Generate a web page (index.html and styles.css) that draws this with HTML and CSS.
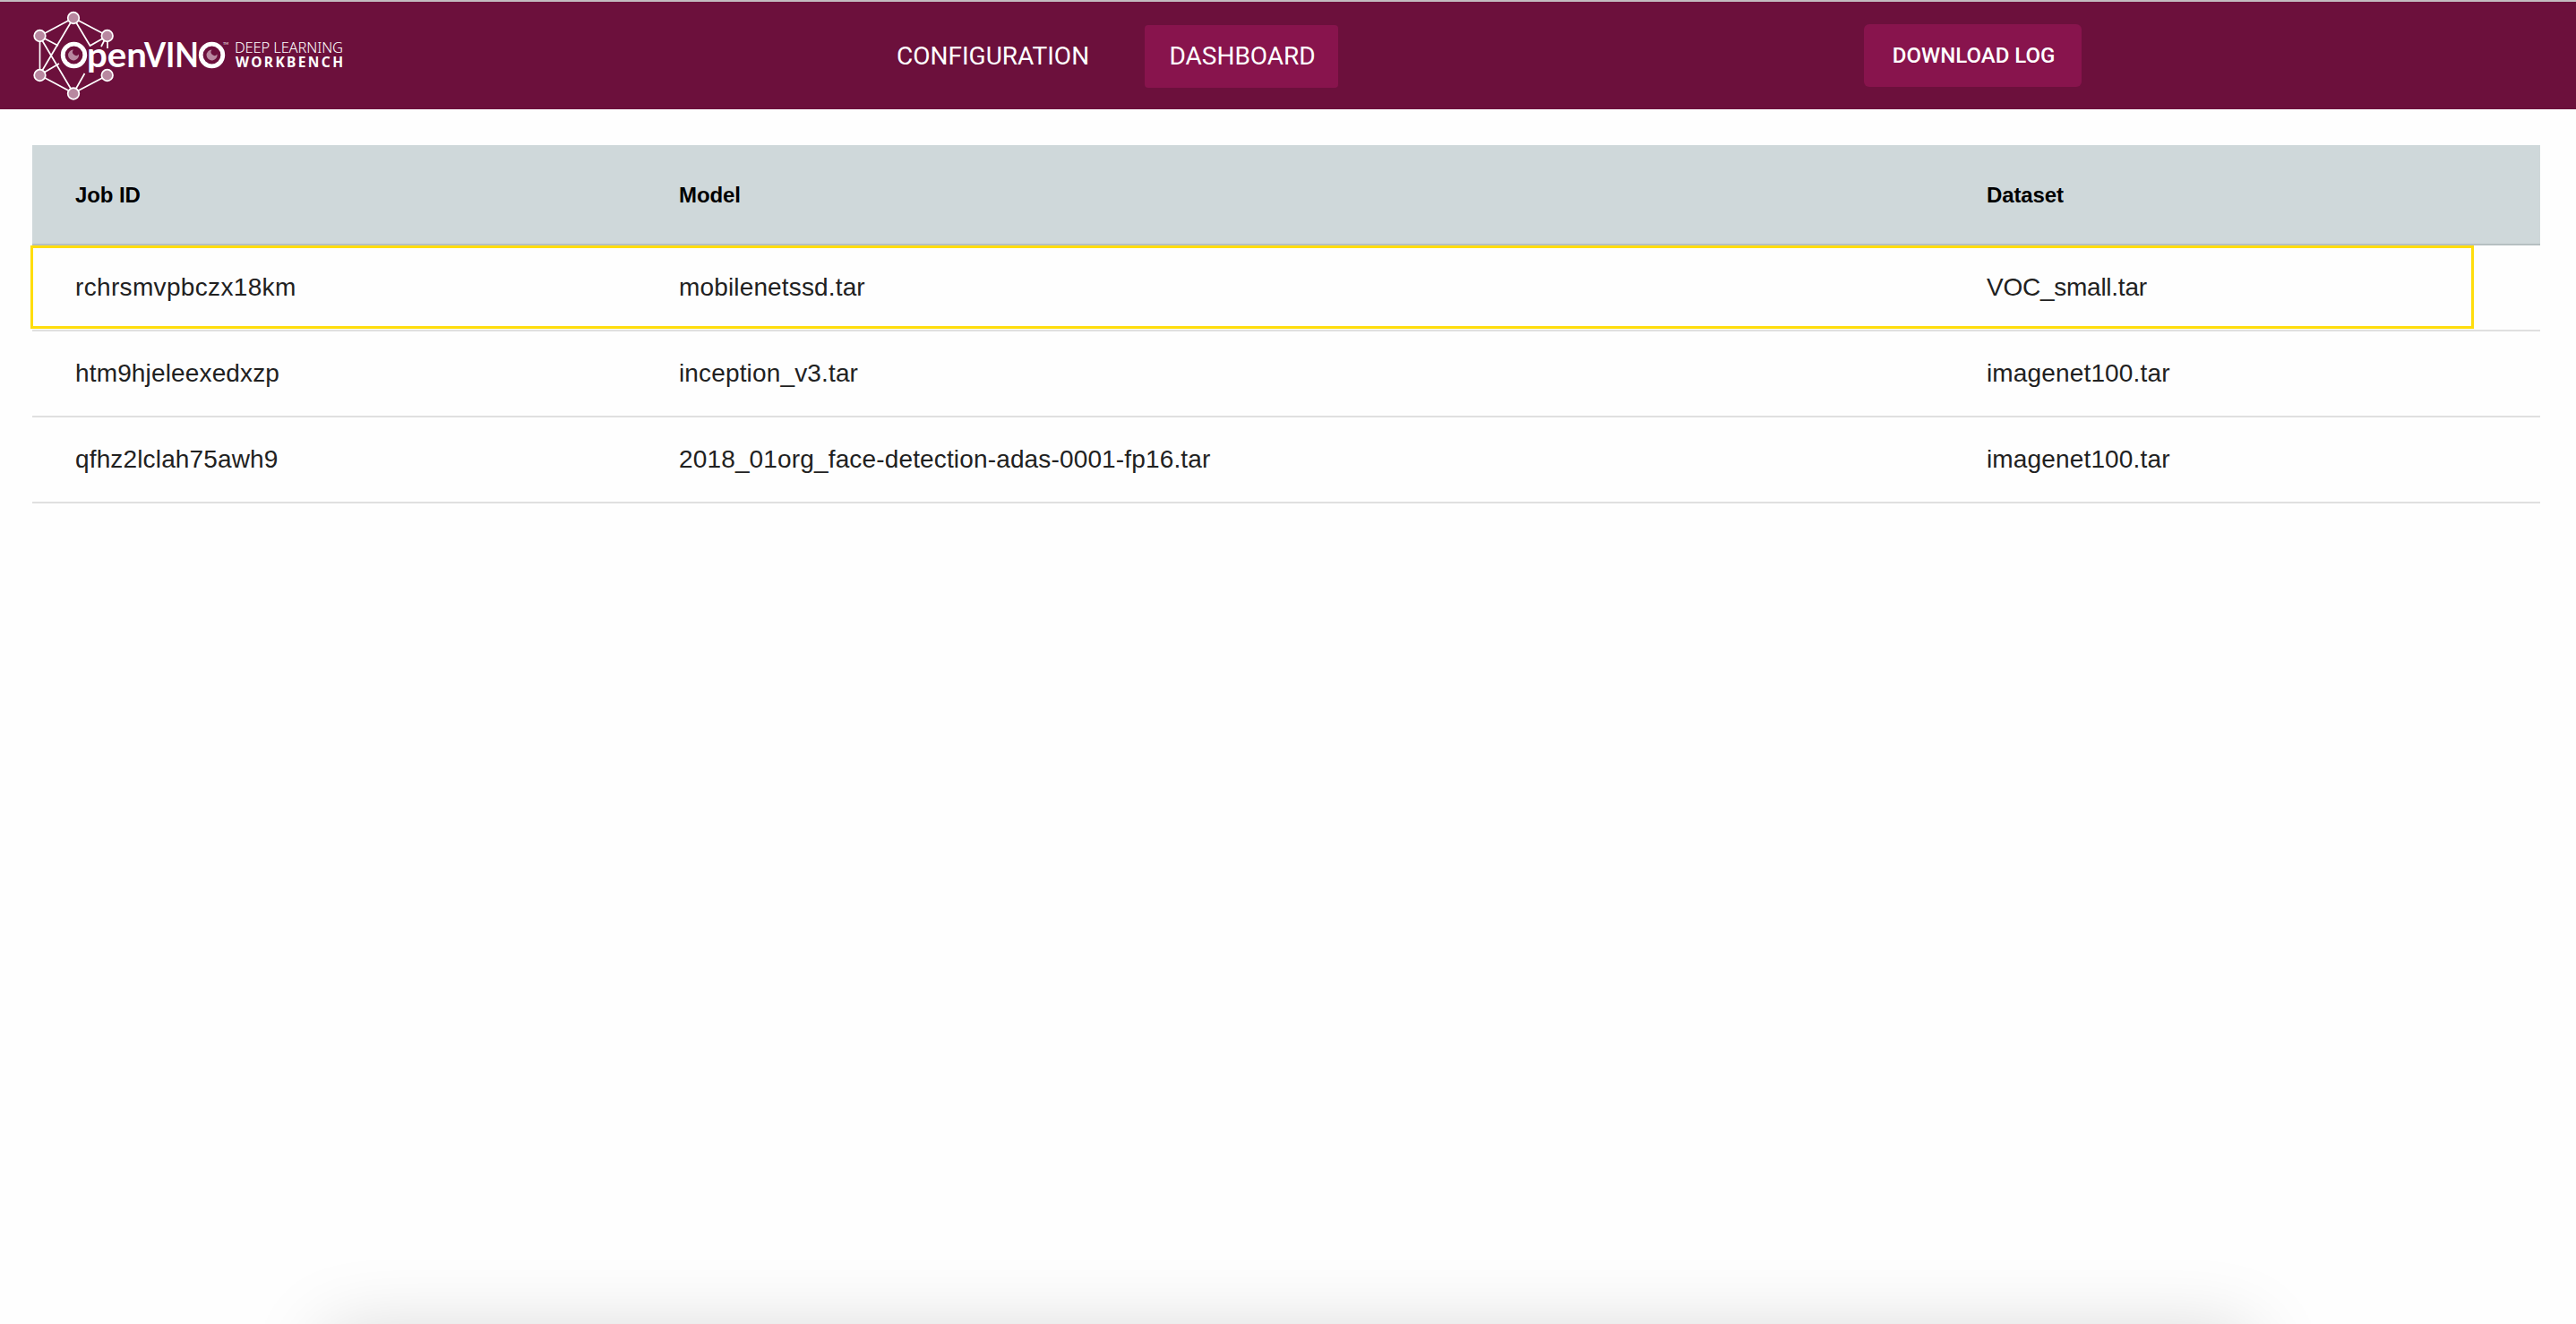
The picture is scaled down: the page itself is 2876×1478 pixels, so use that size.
FILE: index.html
```html
<!DOCTYPE html>
<html lang="en">
<head>
<meta charset="utf-8">
<title>OpenVINO Deep Learning Workbench</title>
<link rel="stylesheet" href="styles.css">
</head>
<body>
<header class="topbar">
  <svg class="logo" width="390" height="120" viewBox="0 2 390 120" role="img" aria-label="OpenVINO Deep Learning Workbench">
    <g class="edges">
      <path d="M82 20L44.500 40V84L82 104L120 84M82 20L120 40V54"/>
      <path d="M82 20L44 84M82 20L100.500 51L120 40M44 40L65 51M44 40L82 104L94.500 82M44 84L66 71M118 42L113 52"/>
    </g>
    <g class="nodes">
      <circle cx="82" cy="20" r="6.300"/><circle cx="44.500" cy="40" r="6.300"/><circle cx="119.700" cy="40" r="6.300"/>
      <circle cx="44.500" cy="84" r="6.300"/><circle cx="119.700" cy="84" r="6.300"/><circle cx="82" cy="104.500" r="6.300"/>
    </g>
    <circle class="ring" cx="82.500" cy="61.500" r="12.300"/>
    <circle class="ring" cx="236.500" cy="61.500" r="12.300"/>
    <path class="pupil" d="M82 55.500a6 6 0 1 0 6 5a3.500 3.500 0 0 1-6-5z"/>
    <path class="pupil" d="M236.500 55.500a6 6 0 1 0 6 5a3.500 3.500 0 0 1-6-5z"/>
    <text class="brand" x="97" y="75" textLength="67" lengthAdjust="spacingAndGlyphs">pen</text>
    <text class="brand" x="161" y="75" textLength="61" lengthAdjust="spacingAndGlyphs">VIN</text>
    <text class="tm" x="249" y="50">TM</text>
    <text class="sub" x="262" y="58.500" textLength="121">DEEP LEARNING</text>
    <text class="sub strong" x="263" y="75" textLength="120">WORKBENCH</text>
  </svg>
  <nav class="tabs">
    <a class="tab">CONFIGURATION</a>
    <a class="tab active">DASHBOARD</a>
  </nav>
  <button class="download">DOWNLOAD LOG</button>
</header>
<main class="content">
  <div class="jobs">
    <div class="row head"><span>Job ID</span><span>Model</span><span>Dataset</span></div>
    <div class="row selected"><span class="wide">rchrsmvpbczx18km</span><span>mobilenetssd.tar</span><span class="tight">VOC_small.tar</span></div>
    <div class="row"><span>htm9hjeleexedxzp</span><span>inception_v3.tar</span><span>imagenet100.tar</span></div>
    <div class="row"><span>qfhz2lclah75awh9</span><span>2018_01org_face-detection-adas-0001-fp16.tar</span><span>imagenet100.tar</span></div>
  </div>
</main>
<div class="shadow-clip"><div class="bottom-shadow"></div></div>
</body>
</html>
```
FILE: styles.css
```css
* { box-sizing: border-box; }
body {
  margin: 0;
  height: 1478px;
  position: relative;
  background: #fefefe;
  color: #212121;
  font-family: "Liberation Sans", Arial, sans-serif;
}
.topbar {
  display: flex;
  align-items: center;
  height: 122px;
  border-top: 2px solid #c3bcc0;
  background: #6c103c;
}
.logo { flex: none; }
.edges { fill: none; stroke: #fff; stroke-width: 1.700; }
.nodes { fill: #b888a0; stroke: #fff; stroke-width: 1.700; }
.ring { fill: #6c103c; stroke: #fff; stroke-width: 4.800; }
.pupil { fill: #b888a0; }
.brand { font: 700 38.500px Lato, sans-serif; fill: #fff; }
.tm { font: 4px Lato, sans-serif; fill: #fff; }
.sub { font: 300 16.500px "Noto Sans", sans-serif; fill: #fff; }
.strong { font-weight: 700; font-size: 15.500px; }
.tabs { display: flex; margin-left: 584px; padding-top: 2px; gap: 35px; }
.tab {
  display: flex;
  align-items: center;
  justify-content: center;
  height: 70px;
  padding: 0 27px 2px;
  border-radius: 4px;
  color: #fff;
  font: 400 28px Roboto, sans-serif;
}
.active { width: 216px; padding-left: 28px; padding-right: 26px; background: #88144d; }
.download {
  width: 243px;
  height: 70px;
  margin: 0 0 0 587px;
  padding: 0 0 0 2px;
  border: 0;
  border-radius: 6px;
  background: #88144d;
  color: #fff;
  font: 500 24px Roboto, sans-serif;
}
.content { padding: 40px 40px 0 36px; }
.row {
  display: grid;
  grid-template-columns: 674px 1460px 1fr;
  align-items: center;
  position: relative;
  height: 96px;
  padding-left: 48px;
  border-bottom: 2px solid #e0e0e0;
  font-size: 28px;
  letter-spacing: .15px;
}
.wide { letter-spacing: .34px; }
.tight { letter-spacing: -.25px; }
.head {
  height: 112px;
  padding-top: 2px;
  border-color: #b6bfc1;
  background: #cfd8da;
  color: #000;
  font-size: 24px;
  font-weight: 700;
  letter-spacing: -.1px;
}
.selected::after {
  content: "";
  position: absolute;
  inset: 0 74px 1px -2px;
  border: 3px solid #ffdd0c;
}
.shadow-clip {
  position: absolute;
  inset: auto 0 0 0;
  height: 120px;
  overflow: hidden;
  pointer-events: none;
}
.bottom-shadow {
  margin: 130px 365px 0 365px;
  height: 200px;
  box-shadow: 0 0 85px rgba(0, 0, 0, .17);
}
```
